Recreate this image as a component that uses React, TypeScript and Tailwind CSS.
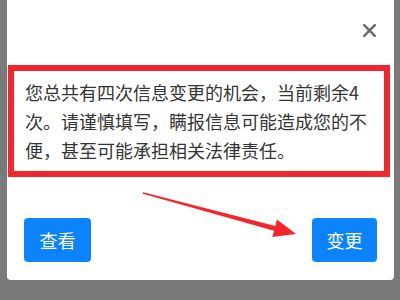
import React from "react";

export default function App() {
  return (
    <div
      className="relative w-[400px] h-[300px] bg-[#7a7a7a] pl-[7px] overflow-hidden"
      style={{ fontFamily: '"Noto Sans CJK SC", "Noto Sans", sans-serif' }}
    >
      <div className="w-[387px] h-[280px] bg-white rounded-b-[4px] flex flex-col">
        <div className="h-[65px] flex items-start justify-end pr-[18px] pt-[24px]">
          <svg width="13" height="13" viewBox="0 0 13 13">
            <path d="M1.2 1.2 L11.8 11.8 M11.8 1.2 L1.2 11.8" stroke="#6e6e6e" strokeWidth="2.6" strokeLinecap="round" />
          </svg>
        </div>
        <div className="ml-[1px] w-[382px] h-[112px] border-[6px] border-[#f2262c] pl-[11px] pt-[7px]">
          <p className="w-[346px] text-[18px] leading-[29px] text-[#353535]">
            您总共有四次信息变更的机会，当前剩余4次。请谨慎填写，瞒报信息可能造成您的不便，甚至可能承担相关法律责任。
          </p>
        </div>
        <div className="flex justify-between pl-[17px] pr-[17px] mt-[41px]">
          <button className="w-[67px] h-[44px] rounded-[4px] bg-[#0b84fb] text-white text-[18px] flex items-center justify-center">
            查看
          </button>
          <button className="w-[65px] h-[44px] rounded-[4px] bg-[#0b84fb] text-white text-[18px] flex items-center justify-center">
            变更
          </button>
        </div>
      </div>
      <svg className="absolute left-0 top-0" width="400" height="300" viewBox="0 0 400 300">
        <polygon
          points="143.2,192.3 275.35,225.9 277,219.6 296,234 272.4,237 274.05,230.7 142.8,193.7"
          fill="#f2262c"
        />
      </svg>
    </div>
  );
}
